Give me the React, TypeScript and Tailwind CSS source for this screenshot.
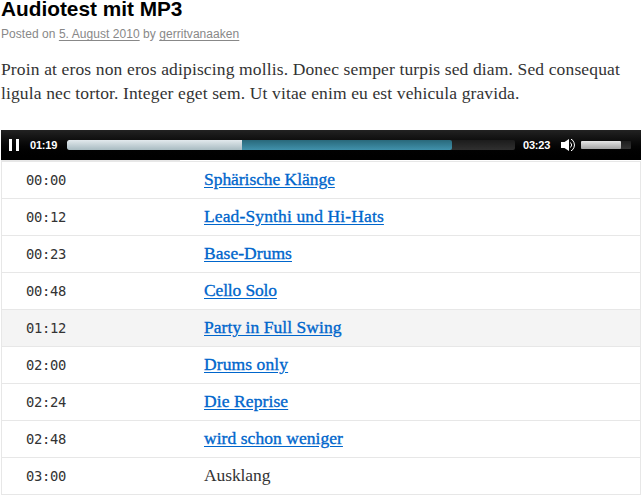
type Chapter = { time: string; title: string; link?: boolean; active?: boolean; tracking: string };

const chapters: Chapter[] = [
  { time: "00:00", title: "Sphärische Klänge", link: true, tracking: "tracking-[-0.05px]" },
  { time: "00:12", title: "Lead-Synthi und Hi-Hats", link: true, tracking: "tracking-[0.13px]" },
  { time: "00:23", title: "Base-Drums", link: true, tracking: "tracking-[0.05px]" },
  { time: "00:48", title: "Cello Solo", link: true, tracking: "tracking-[-0.15px]" },
  { time: "01:12", title: "Party in Full Swing", link: true, active: true, tracking: "tracking-[0.05px]" },
  { time: "02:00", title: "Drums only", link: true, tracking: "tracking-[0.1px]" },
  { time: "02:24", title: "Die Reprise", link: true, tracking: "tracking-[0.1px]" },
  { time: "02:48", title: "wird schon weniger", link: true, tracking: "tracking-[0.05px]" },
  { time: "03:00", title: "Ausklang", tracking: "tracking-[-0.1px]" },
];

function Player() {
  return (
    <div className="mt-[25px] flex h-[30px] items-center bg-linear-to-b from-[#222] to-black pl-2 text-[11px] font-bold text-white">
      <button className="flex gap-1" aria-label="Pause">
        <span className="h-3 w-[3px] bg-white" />
        <span className="h-3 w-[3px] bg-white" />
      </button>
      <span className="ml-[11px] w-[37px] tracking-[-0.2px]">01:19</span>
      <div className="flex h-2.5 w-[448px] overflow-hidden rounded-[2px] bg-linear-to-b from-[#1c1c1c] to-[#303030]">
        <div className="h-full w-[175px] rounded-l-[2px] bg-linear-to-b from-[#e2e9ed] to-[#a8bbc1]" />
        <div className="h-full w-[210px] rounded-r-[2px] bg-linear-to-b from-[#29697b] to-[#4192ac]" />
      </div>
      <span className="ml-2 w-[38px] tracking-[-0.2px]">03:23</span>
      <svg className="h-3.5 w-4" viewBox="0 0 16 14" fill="none" stroke="white">
        <path d="M0 4h3.500L8 1v12L3.500 10H0z" fill="white" stroke="none" />
        <path d="M9.500 4.500q2.500 2.500 0 5M10 1.500h1q5 5.500 0 11h-1" strokeWidth="1" />
      </svg>
      <div className="ml-1 h-2 w-[50px] rounded-[1px] bg-linear-to-b from-[#1e1e1e] to-[#333]">
        <div className="h-full w-10 rounded-[1px] bg-linear-to-b from-[#e6e6e6] to-[#a3a3a3]" />
      </div>
    </div>
  );
}

export default function App() {
  return (
    <main className="h-[495px] w-[641px] bg-white pl-px font-['Liberation_Sans',sans-serif]">
      <h1 className="h-[22px] whitespace-nowrap text-[20.8px] leading-[17px] font-bold text-black">Audiotest mit MP3</h1>
      <p className="mt-[3px] h-[18px] whitespace-nowrap text-[12px] leading-[18px] tracking-[0.05px] text-[#888]">
        Posted on <a className="underline underline-offset-2">5. August 2010</a> by <a className="underline underline-offset-2">gerritvanaaken</a>
      </p>
      <div className="mt-[14px] h-12 font-['Liberation_Serif',serif] text-[17.5px] leading-6 whitespace-nowrap text-[#333]">
        <p className="tracking-[0.14px]">Proin at eros non eros adipiscing mollis. Donec semper turpis sed diam. Sed consequat</p>
        <p className="tracking-[0.13px]">ligula nec tortor. Integer eget sem. Ut vitae enim eu est vehicula gravida.</p>
      </div>
      <Player />
      <div className="h-px w-[179px] bg-[#e7e7e7]" />
      <ol className="border border-b-0 border-[#e7e7e7]">
        {chapters.map((c) => (
          <li key={c.time} className={`flex h-[37px] items-center border-b border-[#e7e7e7] pl-6 ${c.active ? "bg-[#f4f4f4]" : ""}`}>
            <span className="w-[178px] font-['DejaVu_Sans_Mono',monospace] text-[13.8px] tracking-[-0.3px] text-[#333]">{c.time}</span>
            <span className={`pb-0.5 font-['Liberation_Serif',serif] text-[17.5px] leading-6 whitespace-nowrap ${c.tracking} ${c.link ? "text-[#0066cc] underline underline-offset-[1.5px] [-webkit-text-stroke:0.35px_#0066cc]" : "text-[#333]"}`}>
              {c.title}
            </span>
          </li>
        ))}
      </ol>
    </main>
  );
}
